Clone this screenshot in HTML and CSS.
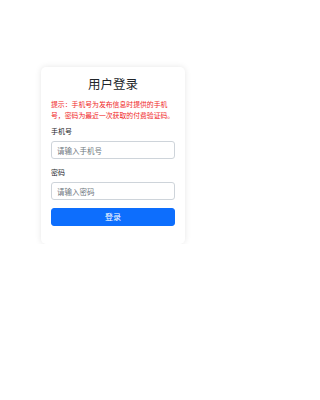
FILE: index.html
```html
<!DOCTYPE html>
<html lang="zh">
<head>
<meta charset="utf-8">
<meta name="viewport" content="width=225">
<title>用户登录</title>
<link rel="stylesheet" href="styles.css">
</head>
<body>
<div class="page">
  <div class="card">
    <h1 class="title">用户登录</h1>
    <p class="tip">提示：手机号为发布信息时提供的手机号，密码为最近一次获取的付费验证码。</p>
    <label class="label" for="phone">手机号</label>
    <input class="input" id="phone" type="text" placeholder="请输入手机号">
    <label class="label label-pw" for="pw">密码</label>
    <input class="input" id="pw" type="password" placeholder="请输入密码">
    <button class="btn" type="button">登录</button>
  </div>
</div>
</body>
</html>
```
FILE: styles.css
```css
html, body {
  margin: 0;
  padding: 0;
  background: #ffffff;
}
body {
  font-family: "Noto Sans CJK SC", "Noto Sans", sans-serif;
  color: #212529;
}
.page {
  width: 225px;
  padding-top: 67px;
}
.card {
  box-sizing: border-box;
  width: 144px;
  margin: 0 0 0 41px;
  padding: 8px 10px 18px;
  background: #fff;
  border-radius: 5px;
  box-shadow: 0 0 6px rgba(0, 0, 0, 0.1);
  display: flex;
  flex-direction: column;
}
.title {
  margin: 0;
  font-size: 12.5px;
  line-height: 17px;
  font-weight: 400;
  text-align: center;
  color: #212529;
}
.tip {
  margin: 6.5px 0 0;
  font-size: 6.85px;
  line-height: 11px;
  color: #f01e1e;
}
.label {
  margin-top: 5px;
  font-size: 7px;
  line-height: 11px;
  color: #212529;
}
.label-pw {
  margin-top: 7.5px;
}
.input {
  box-sizing: border-box;
  margin: 4.5px 0 0;
  width: 100%;
  height: 18px;
  padding: 0 5px;
  border: 1px solid #ced4da;
  border-radius: 3px;
  font-family: inherit;
  font-size: 7.5px;
  color: #212529;
  background: #fff;
  outline: none;
}
.input::placeholder {
  color: #6c757d;
}
.btn {
  box-sizing: border-box;
  margin-top: 7.5px;
  width: 100%;
  height: 18px;
  padding: 0;
  border: 1px solid #0d6efd;
  border-radius: 3px;
  background: #0d6efd;
  color: #fff;
  font-family: inherit;
  font-size: 8px;
  line-height: 16px;
}
```
